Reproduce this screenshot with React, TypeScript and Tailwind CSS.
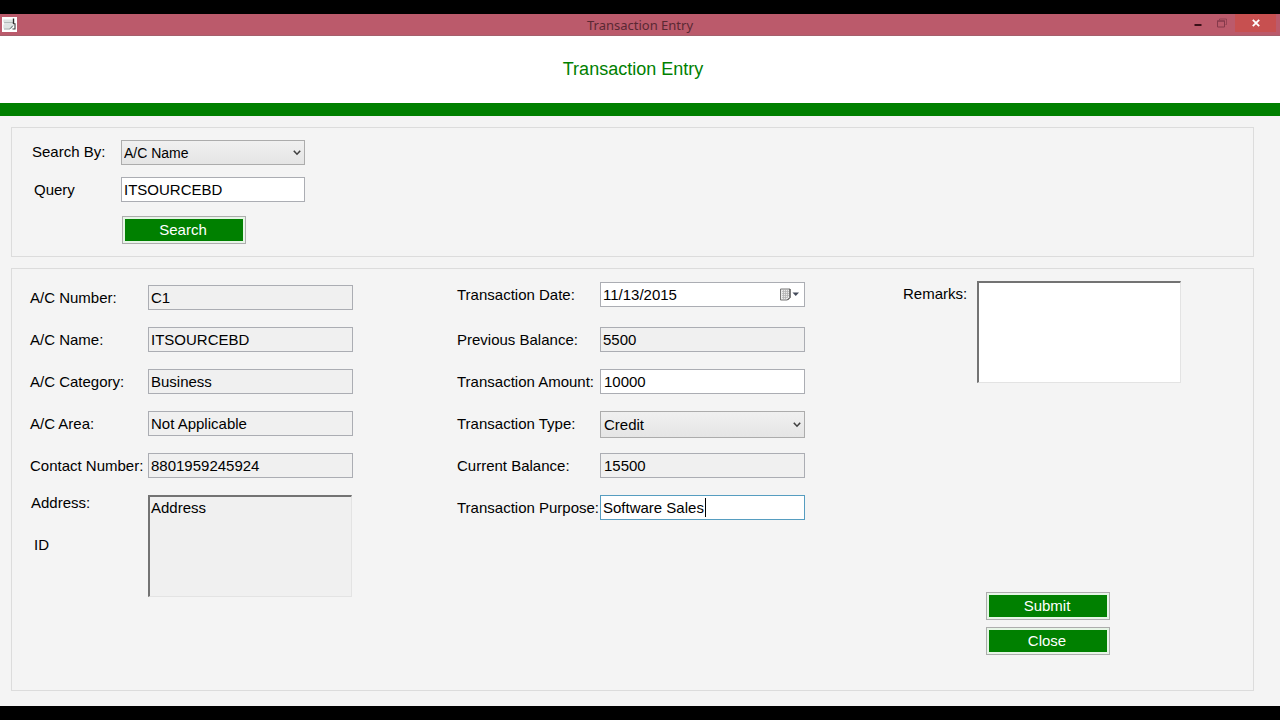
import React, { useId, useState } from 'react';

const fieldBase =
  'block h-[25px] w-full rounded-none border px-[2px] text-[15px] leading-5 text-black outline-none';

function ChevronIcon() {
  return (
    <svg
      className="pointer-events-none absolute top-1/2 right-1 -translate-y-1/2"
      width="8"
      height="6"
      viewBox="0 0 8 6"
      fill="none"
      aria-hidden="true"
    >
      <path d="M0.8 0.8 4 4.2 7.2 0.8" stroke="#404040" strokeWidth="1.6" />
    </svg>
  );
}

function Row({ label, children, tall = false }: {
  label: string;
  children: (id: string) => React.ReactNode;
  tall?: boolean;
}) {
  const id = useId();
  return (
    <div className={tall ? 'flex h-7 items-start' : 'flex h-[25px] items-start'}>
      <label htmlFor={id} className="w-[var(--label)] shrink-0 leading-[25px] whitespace-nowrap">
        {label}
      </label>
      <div className="relative w-[205px] shrink-0">{children(id)}</div>
    </div>
  );
}

function TextRow({ label, value, readOnly = false, indent = false }: {
  label: string;
  value: string;
  readOnly?: boolean;
  indent?: boolean;
}) {
  const [text, setText] = useState(value);
  return (
    <Row label={label}>
      {(id) => (
        <input
          id={id}
          type="text"
          readOnly={readOnly}
          value={text}
          onChange={(e) => setText(e.target.value)}
          className={`${fieldBase} border-[#abadb3] ${readOnly ? 'bg-[#f0f0f0]' : 'bg-white'} ${indent ? 'pl-[3px]' : ''}`}
        />
      )}
    </Row>
  );
}

function GreenButton({ children }: { children: React.ReactNode }) {
  return (
    <button
      type="button"
      className="flex h-7 w-[124px] border border-[#adadad] bg-[#e6f5e6] p-[2px] text-[15px] text-white"
    >
      <span className="flex h-full w-full items-center justify-center bg-[#008000] pr-[2px]">{children}</span>
    </button>
  );
}

function TitleBar() {
  return (
    <header className="relative flex h-[22px] items-center justify-between border-b border-[#a5606c] bg-[#bb5a6b]">
      <svg className="ml-[2px]" width="15" height="15" viewBox="0 0 15 15" fill="none" aria-hidden="true">
        <rect width="15" height="15" fill="#fff" />
        <path d="M2.500 2.500h8v3h-8zM2.500 7h8v4.500h-8z" fill="#dde4e2" />
        <path d="M2 5.800h9M2 12h6" stroke="#8f9a98" strokeWidth="0.9" />
        <path d="M2 2.500v3M2 7.500v4" stroke="#c2cac8" strokeWidth="0.8" />
        <path d="M11.500 1.500v5.500" stroke="#2b2b2b" strokeWidth="1.400" />
        <path d="M11 6.800h2v5.200h-2.500" stroke="#3a3a3a" strokeWidth="1.100" />
        <path d="M8 11.800 11 8.500" stroke="#566" strokeWidth="1" />
      </svg>
      <h1 className="pointer-events-none absolute inset-x-0 text-center font-['Noto_Sans','Open_Sans',sans-serif] text-[13px] leading-[22px] text-[#5a2833]">
        Transaction Entry
      </h1>
      <div className="flex h-full items-start">
        <button type="button" aria-label="Minimize" className="flex h-[18px] w-6 items-center justify-center">
          <svg width="8" height="12" viewBox="0 0 8 12">
            <path d="M0.5 8h7" stroke="#3a1018" strokeWidth="2" />
          </svg>
        </button>
        <button type="button" aria-label="Restore" className="flex h-[18px] w-[25px] items-center justify-center pr-[2px]">
          <svg width="10" height="10" viewBox="0 0 10 10" fill="none" stroke="#84394a">
            <path d="M0.5 3h7v6h-7z" />
            <path d="M0 3h8" />
            <path d="M2.5 2V1h7v5.500H8.500" strokeOpacity="0.7" />
          </svg>
        </button>
        <button type="button" aria-label="Close window" className="mr-1 flex h-[18px] w-[41px] items-center justify-center bg-[#c75050]">
          <svg width="8" height="8" viewBox="0 0 8 8" stroke="#fff" strokeWidth="1.8">
            <path d="M0.8 0.8 7.2 7.2M7.2 0.8 0.8 7.2" />
          </svg>
        </button>
      </div>
    </header>
  );
}

export default function App() {
  const [query, setQuery] = useState('ITSOURCEBD');
  const [date, setDate] = useState('11/13/2015');
  const [purpose, setPurpose] = useState('Software Sales');

  return (
    <div className="flex min-h-screen flex-col border-y-[14px] border-black bg-[#f4f4f4] font-['Liberation_Sans',Arial,sans-serif] text-[15px] text-black">
      <TitleBar />
      <div className="flex h-[67px] items-center justify-center bg-white pr-[14px] text-[18px] text-[#008000]">
        <h2>Transaction Entry</h2>
      </div>
      <div className="h-[13px] bg-[#008000]" />

      <main className="flex grow flex-col gap-[11px] pt-[11px] pr-[26px] pb-[15px] pl-[11px]">
        <section className="grid grid-cols-[89px_184px] gap-y-3 border border-[#dcdcdc] pt-3 pb-3 pl-5">
          <label htmlFor="search-by" className="leading-6">Search By:</label>
          <div className="relative">
            <select
              id="search-by"
              defaultValue="A/C Name"
              className="block h-[25px] w-full appearance-none rounded-none border border-[#acacac] bg-linear-to-b from-[#f0f0f0] to-[#e5e5e5] pl-[2px] text-[14px] leading-5 outline-none"
            >
              <option>A/C Name</option>
              <option>A/C Number</option>
            </select>
            <ChevronIcon />
          </div>
          <label htmlFor="query" className="pl-[2px] leading-[25px]">Query</label>
          <input
            id="query"
            type="text"
            value={query}
            onChange={(e) => setQuery(e.target.value)}
            className={`${fieldBase} border-[#abadb3] bg-white`}
          />
          <div className="col-start-2 pt-[2px] pl-px">
            <GreenButton>Search</GreenButton>
          </div>
        </section>

        <section className="grid grow grid-cols-[427fr_446fr_350fr] border border-[#dcdcdc] pl-[18px]">
          <div className="flex flex-col gap-[17px] pt-4 [--label:118px]">
            <TextRow label="A/C Number:" value="C1" readOnly />
            <TextRow label="A/C Name:" value="ITSOURCEBD" readOnly />
            <TextRow label="A/C Category:" value="Business" readOnly />
            <TextRow label="A/C Area:" value="Not Applicable" readOnly />
            <TextRow label="Contact Number:" value="8801959245924" readOnly />
            <div className="flex">
              <div className="flex w-[118px] shrink-0 flex-col gap-[26px] pl-px leading-4">
                <label htmlFor="address">Address:</label>
                <span className="pl-[3px]">ID</span>
              </div>
              <textarea
                id="address"
                readOnly
                defaultValue="Address"
                className="block h-[102px] w-[204px] resize-none rounded-none border border-t-2 border-l-2 border-[#e3e3e3] border-t-[#737373] border-l-[#737373] bg-[#f0f0f0] px-px pt-[1px] text-[15px] leading-5 outline-none"
              />
            </div>
          </div>

          <div className="flex flex-col gap-[17px] pt-[13px] [--label:143px]">
            <Row label="Transaction Date:" tall>
              {(id) => (
                <>
                  <input
                    id={id}
                    type="text"
                    value={date}
                    onChange={(e) => setDate(e.target.value)}
                    className={`${fieldBase} border-[#abadb3] bg-white`}
                  />
                  <button type="button" aria-label="Open calendar" className="absolute top-[6px] right-[6px]">
                    <svg width="19" height="13" viewBox="0 0 19 13" fill="none">
                      <path d="M0.5 1h9.500v8.500l-2.500 2.500h-7z" fill="#ececec" stroke="#777" />
                      <path d="M2 3.500h7M2 5.500h7M2 7.500h7M2 9.500h5M3.500 2v9M5.500 2v9M7.500 2v8" stroke="#b5b5b5" strokeWidth="0.8" />
                      <path d="M10 1v8.500L7.500 12" stroke="#444" />
                      <path d="M12.500 4.500h6.500l-3.250 3.500z" fill="#444b5a" />
                    </svg>
                  </button>
                </>
              )}
            </Row>
            <TextRow label="Previous Balance:" value="5500" readOnly />
            <TextRow label="Transaction Amount:" value="10000" indent />
            <Row label="Transaction Type:">
              {(id) => (
                <>
                  <select
                    id={id}
                    defaultValue="Credit"
                    className="block h-[27px] w-full appearance-none rounded-none border border-[#acacac] bg-linear-to-b from-[#f0f0f0] to-[#e5e5e5] pl-[3px] text-[15px] leading-5 outline-none"
                  >
                    <option>Credit</option>
                    <option>Debit</option>
                  </select>
                  <ChevronIcon />
                </>
              )}
            </Row>
            <TextRow label="Current Balance:" value="15500" readOnly indent />
            <Row label="Transaction Purpose:">
              {(id) => (
                <>
                  <input
                    id={id}
                    type="text"
                    value={purpose}
                    onChange={(e) => setPurpose(e.target.value)}
                    className={`${fieldBase} border-[#569dc0] bg-white caret-transparent`}
                  />
                  <span className="pointer-events-none absolute top-[3px] left-[105px] h-[19px] w-px bg-black" />
                </>
              )}
            </Row>
          </div>

          <div className="flex flex-col justify-between pt-3 pb-[35px]">
            <div className="flex">
              <label htmlFor="remarks" className="w-[74px] shrink-0 leading-[26px]">Remarks:</label>
              <textarea
                id="remarks"
                className="block h-[102px] w-[204px] resize-none rounded-none border border-t-2 border-l-2 border-[#e3e3e3] border-t-[#737373] border-l-[#737373] bg-white px-px text-[15px] leading-5 outline-none"
              />
            </div>
            <div className="flex flex-col gap-[7px] pl-[83px]">
              <GreenButton>Submit</GreenButton>
              <GreenButton>Close</GreenButton>
            </div>
          </div>
        </section>
      </main>
    </div>
  );
}
